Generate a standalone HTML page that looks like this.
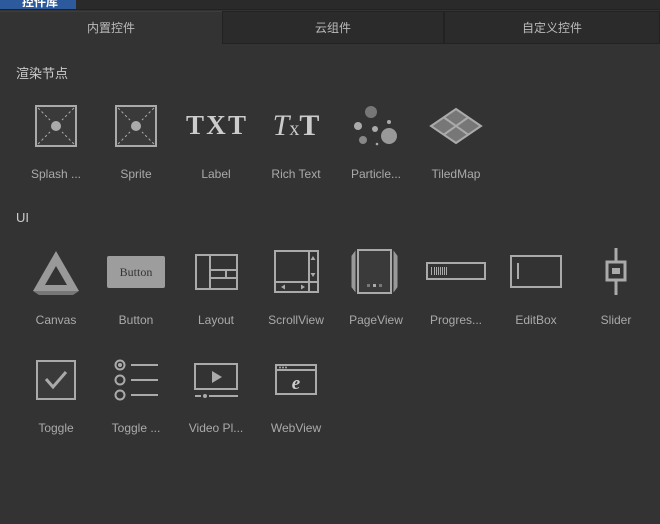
<!DOCTYPE html>
<html><head><meta charset="utf-8"><style>
body{margin:0;width:660px;height:524px;background:#333;overflow:hidden;font-family:"Liberation Sans","Noto Sans CJK SC",sans-serif;position:relative}
.top{position:absolute;left:0;top:0;width:660px;height:9px;background:#2a2a2a;border-bottom:1px solid #222}
.blue{position:absolute;left:0;top:0;width:76px;height:9px;background:#2d5a9c;color:#fff;font-size:12px;line-height:4px;overflow:hidden;padding-left:22px;box-sizing:border-box;font-weight:bold}
.tab{position:absolute;top:11px;height:33px;line-height:33px;text-align:center;font-size:12px;color:#bbb;box-sizing:border-box}
.h{position:absolute;left:16px;font-size:13px;color:#ccc}
.lbl{position:absolute;width:80px;text-align:center;font-size:12px;color:#aaa}
svg{position:absolute;left:0;top:0}
</style></head><body>
<div class="top"></div><div class="blue">控件库</div>
<div class="tab" style="left:0;width:222px;background:#333;border-top:1px solid #3c3c3c">内置控件</div>
<div class="tab" style="left:222px;width:222px;background:#2b2b2b;border:1px solid #222">云组件</div>
<div class="tab" style="left:444px;width:216px;background:#2b2b2b;border:1px solid #222">自定义控件</div>
<div class="h" style="top:63px">渲染节点</div>
<div class="h" style="top:210px">UI</div>

<svg width="660" height="524" fill="none" stroke="#aaa">
<g transform="translate(56,126)"><rect x="-20" y="-20" width="40" height="40" fill="#3a3a3a" stroke-width="2"/><path d="M-18-18L-6-6M18-18L6-6M-18 18L-6 6M18 18L6 6" stroke-dasharray="2.5 2.5" stroke-width="1"/><circle r="5" fill="#aaa" stroke="none"/></g>
<g transform="translate(136,126)"><rect x="-20" y="-20" width="40" height="40" fill="#3a3a3a" stroke-width="2"/><path d="M-18-18L-6-6M18-18L6-6M-18 18L-6 6M18 18L6 6" stroke-dasharray="2.5 2.5" stroke-width="1"/><circle r="5" fill="#aaa" stroke="none"/></g>
<text x="216" y="134" text-anchor="middle" font-family="Liberation Serif" font-weight="bold" font-size="27" fill="#ccc" stroke="none" textLength="60">TXT</text>
<text x="296" y="135" text-anchor="middle" font-family="Liberation Serif" font-size="30" fill="#ccc" stroke="none"><tspan font-style="italic">T</tspan><tspan font-size="20">x</tspan><tspan font-weight="bold">T</tspan></text>
<g fill="#aaa" stroke="none"><circle cx="371" cy="112" r="6" fill="#777"/><circle cx="358" cy="126" r="4"/><circle cx="375" cy="129" r="3"/><circle cx="389" cy="122" r="2"/><circle cx="363" cy="140" r="4" fill="#888"/><circle cx="389" cy="136" r="8" fill="#999"/><circle cx="377" cy="144" r="1.3"/></g>
<g transform="translate(456,126)"><path d="M0-17L25 0L0 17L-25 0Z" stroke-width="2" fill="#777"/><path d="M-12-8.5L12 8.5M12-8.5L-12 8.5" stroke-width="2"/></g>
<path d="M56 251L79 291L33 291Z M56 266L67 285L45 285Z" fill="#999" stroke="none" fill-rule="evenodd"/>
<path d="M33 291L79 291L73 295L39 295Z" fill="#777" stroke="none"/>
<rect x="107" y="256" width="58" height="32" rx="2" fill="#9d9d9d" stroke="none"/>
<text x="136" y="276" text-anchor="middle" font-family="Liberation Serif" font-size="12" fill="#333" stroke="none">Button</text>
<g stroke-width="2"><rect x="196" y="255" width="41" height="34"/><path d="M210 255V289M210 270H237M210 278H237M226 270V278"/></g>
<g stroke-width="2"><rect x="275" y="251" width="43" height="41"/><path d="M275 282H318M309 251V292"/></g>
<g fill="#aaa" stroke="none"><path d="M313 256L315.5 260H310.5Z M313 277L315.5 273H310.5Z M281 287L285 284.5V289.5Z M305 287L301 284.5V289.5Z"/></g>
<g stroke-width="2"><rect x="358" y="250" width="33" height="43" fill="#3a3a3a"/></g>
<path d="M355 252V291L352 287V256Z M394 252V291L397 287V256Z" fill="#999" stroke="#999"/>
<g fill="#777" stroke="none"><rect x="367" y="284" width="3" height="3"/><rect x="373" y="284" width="3" height="3" fill="#aaa"/><rect x="379" y="284" width="3" height="3"/></g>
<rect x="427" y="263" width="58" height="16" stroke-width="2"/>
<path d="M431.5 267V275M434.5 267V275M436.5 267V275M438.5 267V275M440.5 267V275M442.5 267V275M444.5 267V275M446.5 267V275" stroke-width="1"/>
<rect x="511" y="256" width="50" height="31" stroke-width="2"/><path d="M518 263V279" stroke-width="2"/>
<path d="M616 248V295" stroke-width="3"/><rect x="607" y="262" width="18" height="18" fill="#333" stroke-width="3"/><rect x="612" y="268" width="8" height="6" fill="#aaa" stroke="none"/>
<rect x="37" y="361" width="38" height="38" stroke-width="2" fill="#3a3a3a"/><path d="M46 379L53 387L66 372" stroke-width="3"/>
<g stroke-width="2"><circle cx="120" cy="365" r="4.5"/><circle cx="120" cy="380" r="4.5"/><circle cx="120" cy="395" r="4.5"/><path d="M131 365H158M131 380H158M131 395H158"/></g><circle cx="120" cy="365" r="2" fill="#aaa" stroke="none"/>
<rect x="195" y="364" width="42" height="25" stroke-width="2"/><path d="M212 371L222 377L212 383Z" fill="#aaa" stroke="none"/><path d="M195 396H201M209 396H238" stroke-width="2"/><circle cx="205" cy="396" r="2" fill="#aaa" stroke="none"/>
<rect x="276" y="365" width="40" height="29" stroke-width="2"/><path d="M276 370H316" stroke-width="2"/><g fill="#aaa" stroke="none"><circle cx="280" cy="367.5" r="1"/><circle cx="283" cy="367.5" r="1"/><circle cx="286" cy="367.5" r="1"/></g>
<text x="296" y="389" text-anchor="middle" font-family="Liberation Serif" font-style="italic" font-weight="bold" font-size="19" fill="#ccc" stroke="none">e</text>
</svg>

<div class="lbl" style="left:16px;top:167px">Splash ...</div>
<div class="lbl" style="left:96px;top:167px">Sprite</div>
<div class="lbl" style="left:176px;top:167px">Label</div>
<div class="lbl" style="left:256px;top:167px">Rich Text</div>
<div class="lbl" style="left:336px;top:167px">Particle...</div>
<div class="lbl" style="left:416px;top:167px">TiledMap</div>
<div class="lbl" style="left:16px;top:313px">Canvas</div>
<div class="lbl" style="left:96px;top:313px">Button</div>
<div class="lbl" style="left:176px;top:313px">Layout</div>
<div class="lbl" style="left:256px;top:313px">ScrollView</div>
<div class="lbl" style="left:336px;top:313px">PageView</div>
<div class="lbl" style="left:416px;top:313px">Progres...</div>
<div class="lbl" style="left:496px;top:313px">EditBox</div>
<div class="lbl" style="left:576px;top:313px">Slider</div>
<div class="lbl" style="left:16px;top:421px">Toggle</div>
<div class="lbl" style="left:96px;top:421px">Toggle ...</div>
<div class="lbl" style="left:176px;top:421px">Video Pl...</div>
<div class="lbl" style="left:256px;top:421px">WebView</div>
</body></html>
